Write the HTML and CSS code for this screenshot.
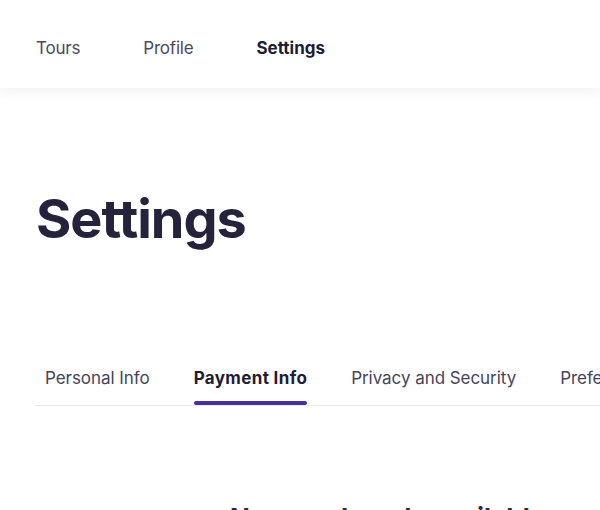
FILE: index.html
```html
<!DOCTYPE html>
<html>
<head>
<meta charset="utf-8">
<link rel="stylesheet" href="styles.css">
</head>
<body>
<header class="topbar">
  <nav class="mainnav">
    <a class="navlink">Tours</a>
    <a class="navlink">Profile</a>
    <a class="navlink active">Settings</a>
  </nav>
</header>
<main class="page">
  <h1 class="title">Settings</h1>
  <div class="tabs">
    <span class="tab">Personal Info</span>
    <span class="tab active">Payment Info</span>
    <span class="tab">Privacy and Security</span>
    <span class="tab">Preferences</span>
  </div>
  <section class="content">
    <h2 class="empty">No saved cards available</h2>
  </section>
</main>
</body>
</html>
```
FILE: styles.css
```css
* { box-sizing: border-box; }
html, body { margin: 0; padding: 0; background: #fff; overflow: hidden; }
body { font-family: Inter, "Noto Sans", sans-serif; color: #25233a; width: 600px; height: 510px; }
.topbar {
  height: 88px;
  background: #fff;
  box-shadow: 0 4px 10px rgba(30, 30, 60, 0.06);
  display: flex;
  align-items: center;
  padding: 8px 0 0 36px;
  position: relative;
}
.mainnav { display: flex; gap: 63px; }
.navlink { font-size: 17px; color: #4b4a5c; letter-spacing: -0.2px; }
.navlink.active { font-weight: 700; color: #1f1d33; letter-spacing: 0; }
.page { padding: 0 0 0 35px; }
.title {
  margin: 98px 0 0 1px;
  font-size: 54px;
  font-weight: 700;
  letter-spacing: -1px;
  color: #25233c;
  line-height: 66px;
}
.tabs {
  margin-top: 116px;
  display: flex;
  gap: 44px;
  padding-left: 10px;
  border-bottom: 1px solid #ececf0;
  white-space: nowrap;
}
.tab {
  font-size: 17px;
  color: #45445a;
  padding-bottom: 17px;
  position: relative;
  letter-spacing: -0.05px;
}
.tab.active { font-weight: 700; color: #1f1d33; letter-spacing: 0.35px; }
.tab.active::after {
  content: "";
  position: absolute;
  left: 0; right: 0; bottom: 0;
  height: 4px;
  border-radius: 2px;
  background: #4a2d9e;
}
.content { display: flex; padding: 96px 0 0 195px; }
.empty { margin: 0; font-size: 26px; font-weight: 700; color: #2b2940; white-space: nowrap; }
```
